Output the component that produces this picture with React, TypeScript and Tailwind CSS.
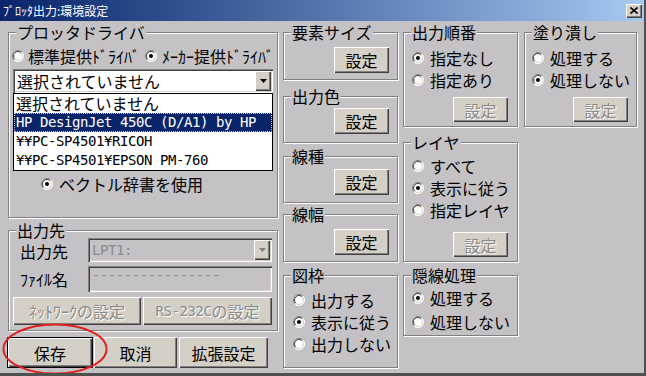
import React from 'react';

const SUNKEN =
  'shadow-[inset_1px_1px_0_#808080,inset_2px_2px_0_#404040,inset_-1px_-1px_0_#fff,inset_-2px_-2px_0_#d4d0c8]';
const RAISED = 'shadow-[inset_1px_1px_0_#fff,inset_-1px_-1px_0_#404040,inset_-2px_-2px_0_#808080]';
const MONO = "font-['DejaVu_Sans_Mono','Noto_Sans_CJK_JP',monospace] text-[14px] tracking-[-0.43px]";
const OFF = 'text-[#8a8a8a] [text-shadow:1px_1px_0_#fff]';

function Radio({ on }: { on?: boolean }) {
  return (
    <svg width="12" height="12" viewBox="0 0 12 12" className="shrink-0">
      <circle cx="6" cy="6" r="5.5" fill="#fff" />
      <path d="M2.1 9.9A5.5 5.5 0 0 1 9.9 2.1" fill="none" stroke="#808080" />
      <path d="M2.8 9.2A4.5 4.5 0 0 1 9.2 2.8" fill="none" stroke="#404040" />
      <path d="M9.9 2.1A5.5 5.5 0 0 1 2.1 9.9" fill="none" stroke="#fff" />
      <path d="M9.2 2.8A4.5 4.5 0 0 1 2.8 9.2" fill="none" stroke="#d4d0c8" />
      {on && <circle cx="6" cy="6" r="2" fill="#000" />}
    </svg>
  );
}

function Row({ on, text, h = 'h-[22px]' }: { on?: boolean; text: string; h?: string }) {
  return (
    <div className={`flex items-center gap-[6px] ${h}`}>
      <Radio on={on} />
      <span className="text-[16px] leading-[18px]">{text}</span>
    </div>
  );
}

function Btn({
  children,
  off,
  def,
  className = '',
}: {
  children: React.ReactNode;
  off?: boolean;
  def?: boolean;
  className?: string;
}) {
  return (
    <div
      className={`flex shrink-0 items-center justify-center bg-[#d4d0c8] text-[16px] leading-[18px] ${RAISED} ${
        def ? 'border border-black' : ''
      } ${off ? OFF : 'text-black'} ${className}`}
    >
      {children}
    </div>
  );
}

function Group({ label, className = '', children }: { label: string; className?: string; children?: React.ReactNode }) {
  return (
    <div className={`relative shrink-0 border border-[#808080] shadow-[inset_1px_1px_0_#fff,1px_1px_0_#fff] ${className}`}>
      <span className="absolute left-[7px] top-[-9px] bg-[#c4c2c4] px-[1px] text-[16px] leading-[16px]">{label}</span>
      {children}
    </div>
  );
}

function DropBtn({ off }: { off?: boolean }) {
  return (
    <div className={`ml-auto mr-[2px] flex h-[20px] w-[16px] items-center justify-center bg-[#d4d0c8] ${RAISED}`}>
      <svg width="7" height="4" viewBox="0 0 7 4">
        <path d="M0 0h7L3.5 4z" fill={off ? '#808080' : '#000'} />
      </svg>
    </div>
  );
}

function SetBtn({ off }: { off?: boolean }) {
  return (
    <Btn off={off} className="h-[26px] w-[55px]">
      設定
    </Btn>
  );
}

export default function App() {
  return (
    <div className="relative h-[376px] w-[646px] overflow-hidden border-b-[3px] border-r-2 border-[#505050] bg-[#c4c2c4] font-['Noto_Sans_CJK_JP',sans-serif] text-black">
      {/* title bar */}
      <div className="flex h-[21px] items-center bg-linear-to-r from-[#0a246a] to-[#a6caf0] pl-[3px] pr-[2px]">
        <span className="text-[12px] leading-none text-white">ﾌﾟﾛｯﾀ出力:環境設定</span>
        <div className={`ml-auto flex h-[14px] w-[16px] items-center justify-center bg-[#d4d0c8] ${RAISED}`}>
          <svg width="8" height="7" viewBox="0 0 8 7">
            <path d="M0.5 0.5l7 6M7.5 0.5l-7 6" stroke="#000" strokeWidth="1.6" />
          </svg>
        </div>
      </div>

      <div className="flex pl-[8px] pt-[11px]">
        {/* left column */}
        <div className="flex w-[270px] shrink-0 flex-col">
          <Group label="プロッタドライバ" className="h-[186px]">
            <div className="mt-[14px] flex h-[18px] items-center pl-[3px]">
              <Radio />
              <span className="ml-[4px] text-[16px] leading-[18px]">標準提供ﾄﾞﾗｲﾊﾞ</span>
              <span className="ml-[5px] flex items-center">
                <Radio on />
              </span>
              <span className="ml-[5px] text-[16px] leading-[18px]">ﾒｰｶｰ提供ﾄﾞﾗｲﾊﾞ</span>
            </div>
            <div className={`ml-[4px] mt-[4px] flex h-[24px] w-[260px] items-center bg-white pl-[4px] ${SUNKEN}`}>
              <span className="text-[16px] leading-[18px]">選択されていません</span>
              <DropBtn />
            </div>
            <div className="ml-[4px] w-[260px] border border-black bg-white">
              <div className="h-[19px] pl-[2px] text-[16px] leading-[19px]">選択されていません</div>
              <div
                className={`h-[19px] bg-[#0a246a] pl-[2px] leading-[19px] text-white outline-1 outline-dotted outline-[#c8c8c8] -outline-offset-1 ${MONO}`}
              >
                HP DesignJet 450C (D/A1) by HP
              </div>
              <div className={`h-[19px] pl-[2px] leading-[19px] ${MONO}`}>¥¥PC-SP4501¥RICOH</div>
              <div className={`h-[19px] pl-[2px] leading-[19px] ${MONO}`}>¥¥PC-SP4501¥EPSON PM-760</div>
            </div>
            <div className="mt-[4px] pl-[32px]">
              <Row on text="ベクトル辞書を使用" h="h-[18px]" />
            </div>
          </Group>

          <Group label="出力先" className="mt-[12px] h-[101px]">
            <div className="flex items-center pl-[11px] pt-[7px]">
              <span className="w-[68px] pt-[2px] text-[16px] leading-[18px]">出力先</span>
              <div className={`flex h-[24px] w-[184px] items-center pl-[4px] ${SUNKEN}`}>
                <span className={`${MONO} text-[#8a8a8a]`}>LPT1:</span>
                <DropBtn off />
              </div>
            </div>
            <div className="mt-[4px] flex items-center pl-[11px]">
              <span className="w-[68px] text-[16px] leading-[18px]">ﾌｧｲﾙ名</span>
              <div className={`flex h-[26px] w-[184px] items-start pl-[4px] pt-[1px] ${SUNKEN}`}>
                <span className={`${MONO} leading-[16px] text-[#8a8a8a]`}>----------------</span>
              </div>
            </div>
            <div className="mt-[5px] flex pl-[4px]">
              <Btn off className="h-[28px] w-[128px]">
                ﾈｯﾄﾜｰｸの設定
              </Btn>
              <Btn off className="ml-[2px] h-[28px] w-[129px]">
                <span className={MONO}>RS-232C</span>の設定
              </Btn>
            </div>
          </Group>

          <div className="-ml-[1px] mt-[6px] flex">
            <Btn def className="h-[31px] w-[86px]">
              保存
            </Btn>
            <Btn className="ml-[1px] h-[31px] w-[83px]">取消</Btn>
            <Btn className="ml-[2px] h-[31px] w-[89px]">拡張設定</Btn>
          </div>
        </div>

        {/* middle column */}
        <div className="ml-[5px] flex w-[115px] shrink-0 flex-col">
          <Group label="要素サイズ" className="h-[48px]">
            <div className="flex justify-end pr-[8px] pt-[14px]">
              <SetBtn />
            </div>
          </Group>
          <Group label="出力色" className="mt-[16px] h-[47px]">
            <div className="flex justify-end pr-[8px] pt-[11px]">
              <SetBtn />
            </div>
          </Group>
          <Group label="線種" className="mt-[13px] h-[47px]">
            <div className="flex justify-end pr-[8px] pt-[12px]">
              <SetBtn />
            </div>
          </Group>
          <Group label="線幅" className="mt-[11px] h-[48px]">
            <div className="flex justify-end pr-[8px] pt-[14px]">
              <SetBtn />
            </div>
          </Group>
          <Group label="図枠" className="mt-[13px] h-[93px]">
            <div className="pl-[9px] pt-[13px]">
              <Row text="出力する" />
              <Row on text="表示に従う" />
              <Row text="出力しない" />
            </div>
          </Group>
        </div>

        {/* right column A */}
        <div className="ml-[5px] flex w-[115px] shrink-0 flex-col">
          <Group label="出力順番" className="h-[95px]">
            <div className="pl-[8px] pt-[14px]">
              <Row on text="指定なし" />
              <Row text="指定あり" />
            </div>
            <div className="mt-[6px] flex justify-end pr-[9px]">
              <Btn off className="h-[25px] w-[55px]">
                設定
              </Btn>
            </div>
          </Group>
          <Group label="レイヤ" className="mt-[15px] h-[120px]">
            <div className="pl-[8px] pt-[12px]">
              <Row text="すべて" />
              <Row on text="表示に従う" />
              <Row text="指定レイヤ" />
            </div>
            <div className="mt-[11px] flex justify-end pr-[9px]">
              <Btn off className="h-[25px] w-[55px]">
                設定
              </Btn>
            </div>
          </Group>
          <Group label="隠線処理" className="mt-[13px] h-[61px]">
            <div className="pl-[8px] pt-[10px]">
              <Row on text="処理する" h="h-[24px]" />
              <Row text="処理しない" h="h-[24px]" />
            </div>
          </Group>
        </div>

        {/* right column B */}
        <div className="ml-[6px] flex w-[113px] shrink-0 flex-col">
          <Group label="塗り潰し" className="h-[95px]">
            <div className="pl-[7px] pt-[14px]">
              <Row text="処理する" />
              <Row on text="処理しない" />
            </div>
            <div className="mt-[6px] flex justify-end pr-[8px]">
              <Btn off className="h-[25px] w-[55px]">
                設定
              </Btn>
            </div>
          </Group>
        </div>
      </div>

      {/* red annotation ellipse */}
      <svg className="pointer-events-none absolute left-[2px] top-[323px]" width="106" height="52" viewBox="0 0 106 52">
        <ellipse cx="53" cy="26" rx="51.5" ry="24.5" fill="none" stroke="#e0201c" strokeWidth="2" />
      </svg>
    </div>
  );
}
